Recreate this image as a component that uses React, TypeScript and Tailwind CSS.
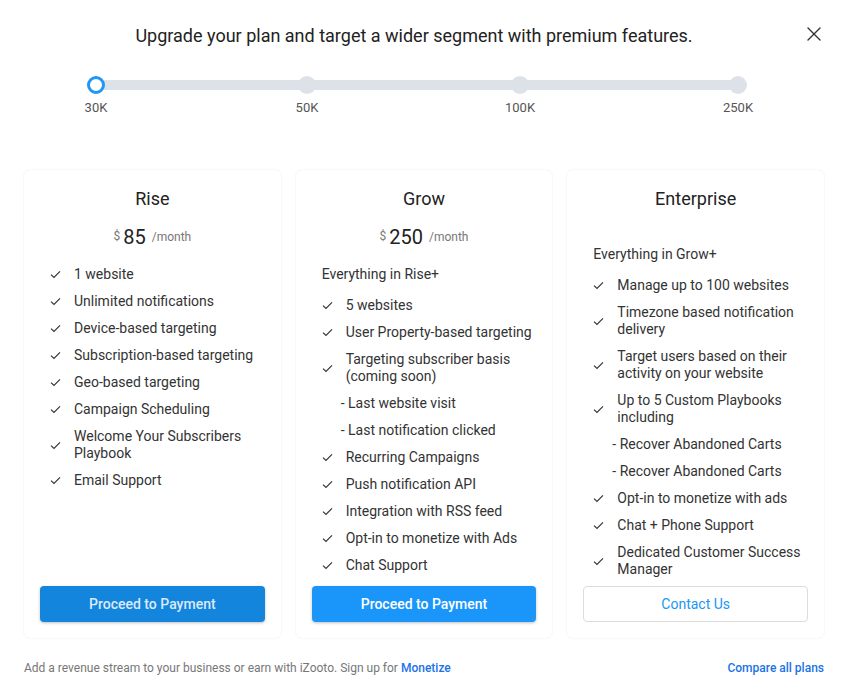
import { X } from "lucide-react";

type Item = { text: string; sub?: boolean };

const plans: {
  name: string;
  price?: string;
  intro?: string;
  items: Item[];
  cta: string;
  variant: "dark" | "light" | "outline";
}[] = [
  {
    name: "Rise",
    price: "85",
    items: [
      { text: "1 website" },
      { text: "Unlimited notifications" },
      { text: "Device-based targeting" },
      { text: "Subscription-based targeting" },
      { text: "Geo-based targeting" },
      { text: "Campaign Scheduling" },
      { text: "Welcome Your Subscribers Playbook" },
      { text: "Email Support" },
    ],
    cta: "Proceed to Payment",
    variant: "dark",
  },
  {
    name: "Grow",
    price: "250",
    intro: "Everything in Rise+",
    items: [
      { text: "5 websites" },
      { text: "User Property-based targeting" },
      { text: "Targeting subscriber basis (coming soon)" },
      { text: "- Last website visit", sub: true },
      { text: "- Last notification clicked", sub: true },
      { text: "Recurring Campaigns" },
      { text: "Push notification API" },
      { text: "Integration with RSS feed" },
      { text: "Opt-in to monetize with Ads" },
      { text: "Chat Support" },
    ],
    cta: "Proceed to Payment",
    variant: "light",
  },
  {
    name: "Enterprise",
    intro: "Everything in Grow+",
    items: [
      { text: "Manage up to 100 websites" },
      { text: "Timezone based notification delivery" },
      { text: "Target users based on their activity on your website" },
      { text: "Up to 5 Custom Playbooks including" },
      { text: "- Recover Abandoned Carts", sub: true },
      { text: "- Recover Abandoned Carts", sub: true },
      { text: "Opt-in to monetize with ads" },
      { text: "Chat + Phone Support" },
      { text: "Dedicated Customer Success Manager" },
    ],
    cta: "Contact Us",
    variant: "outline",
  },
];

const steps = [
  { label: "30K", cls: "" },
  { label: "50K", cls: "ml-[193px]" },
  { label: "100K", cls: "ml-[195px]" },
  { label: "250K", cls: "ml-[200px]" },
];

const Check = () => (
  <svg width="11" height="9" viewBox="0 0 11 9" fill="none" className="shrink-0">
    <path d="M1 4.6 L4 7.4 L10 1.4" stroke="#333" strokeWidth="1.2" />
  </svg>
);

const App = () => {
  return (
    <div
      className="w-[845px] h-[700px] bg-white relative text-[#333]"
      style={{ fontFamily: "Roboto, 'Liberation Sans', sans-serif" }}
    >
      <button className="absolute right-[19px] top-[22px] text-[#333]">
        <X size={24} strokeWidth={1.4} />
      </button>

      <h1 className="pt-6 text-center text-[18px] leading-6 text-[#222] pr-[17px]">
        Upgrade your plan and target a wider segment with premium features.
      </h1>

      {/* slider */}
      <div className="relative ml-[87px] mt-[28px] w-[660px]">
        <div className="absolute left-[9px] right-[9px] top-[4px] h-[10px] bg-[#dde2e8] rounded-full" />
        <div className="relative flex">
          {steps.map((s, i) => (
            <div key={s.label} className={`w-[18px] flex flex-col items-center ${s.cls}`}>
              {i === 0 ? (
                <div className="w-[18px] h-[18px] rounded-full bg-white border-[3px] border-[#2196f3]" />
              ) : (
                <div className="w-[18px] h-[18px] rounded-full bg-[#dde2e8]" />
              )}
              <span className="mt-[6px] text-[13px] leading-4 text-[#555] whitespace-nowrap">
                {s.label}
              </span>
            </div>
          ))}
        </div>
      </div>

      {/* cards */}
      <div className="grid grid-cols-3 gap-[15px] ml-6 w-[800px] mt-[54px]">
        {plans.map((p) => (
          <div
            key={p.name}
            className="h-[468px] rounded-md bg-white shadow-[0_0_2px_rgba(0,0,0,0.1)] flex flex-col px-4 pt-[17px] pb-4"
          >
            <h2 className="text-center text-[18px] leading-6 text-[#222]">{p.name}</h2>
            {p.price && (
              <div className="mt-3 h-7 flex items-center justify-center">
                <span className="text-[12px] text-[#777] mr-[3px] -mt-[2px]">$</span>
                <span className="text-[20px] text-[#222] leading-7">{p.price}</span>
                <span className="text-[12px] text-[#777] ml-[6px]">/month</span>
              </div>
            )}
            {p.intro && (
              <p
                className={`text-[14px] leading-[17px] text-[#333] pl-[10px] ${
                  p.price ? "mt-[15px]" : "mt-[35px]"
                }`}
              >
                {p.intro}
              </p>
            )}
            <ul className={p.intro ? "mt-[9px]" : "mt-[10px]"}>
              {p.items.map((it, idx) =>
                it.sub ? (
                  <li
                    key={idx}
                    className="py-[5px] pl-[29px] text-[14px] leading-[17px] text-[#333]"
                  >
                    {it.text}
                  </li>
                ) : (
                  <li key={idx} className="py-[5px] pl-[10px] flex items-center gap-[13px]">
                    <Check />
                    <span className="text-[14px] leading-[17px] text-[#333]">{it.text}</span>
                  </li>
                )
              )}
            </ul>
            <div className="mt-auto">
              {p.variant === "outline" ? (
                <button className="w-full h-9 rounded border border-[#dcdcdc] bg-white text-[14px] text-[#2196f3]">
                  {p.cta}
                </button>
              ) : (
                <button
                  className={`w-full h-9 rounded text-[14px] font-medium shadow-[0_1px_3px_rgba(0,0,0,0.25)] ${
                    p.variant === "dark"
                      ? "bg-[#1485dd] text-[#dbeafb]"
                      : "bg-[#1a96fb] text-white"
                  }`}
                >
                  {p.cta}
                </button>
              )}
            </div>
          </div>
        ))}
      </div>

      {/* footer */}
      <div className="flex justify-between items-center ml-6 w-[800px] mt-[22px] text-[12px] leading-4">
        <p className="text-[#777]">
          Add a revenue stream to your business or earn with iZooto. Sign up for{" "}
          <a className="text-[#1a73e8] font-medium">Monetize</a>
        </p>
        <a className="text-[#1a73e8] font-medium">Compare all plans</a>
      </div>
    </div>
  );
};

export default App;
